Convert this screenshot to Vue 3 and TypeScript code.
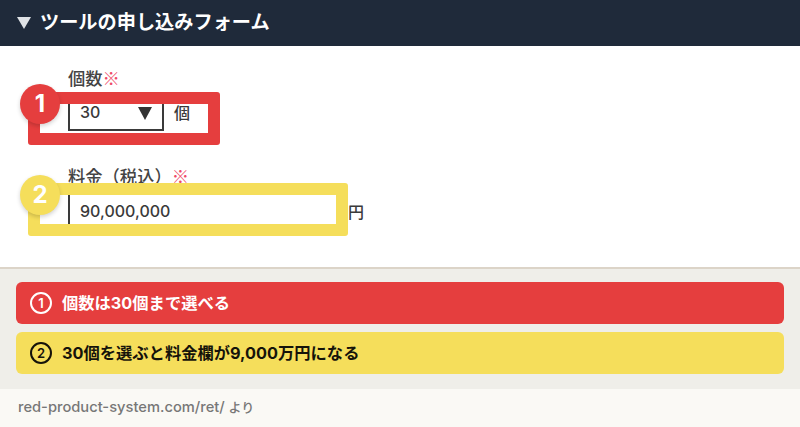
<script setup lang="ts">
const notes = [
  { mark: '1', text: '個数は30個まで選べる', tone: 'red' },
  { mark: '2', text: '30個を選ぶと料金欄が9,000万円になる', tone: 'yellow' },
];
</script>

<template>
  <div class="page">
    <header class="head"><span class="tri"></span><h1>ツールの申し込みフォーム</h1></header>
    <section class="form">
      <div class="field qty">
        <div class="label">個数<em>※</em></div>
        <div class="row">
          <div class="select"><span>30</span><i></i></div>
          <span class="unit">個</span>
        </div>
        <div class="hl hl-red"></div>
        <div class="badge badge-red">1</div>
      </div>
      <div class="field price">
        <div class="label">料金（税込）<em>※</em></div>
        <div class="row">
          <div class="input">90,000,000</div>
          <span class="unit yen">円</span>
        </div>
        <div class="hl hl-yellow"></div>
        <div class="badge badge-yellow">2</div>
      </div>
    </section>
    <section class="notes">
      <div v-for="n in notes" :key="n.mark" class="note" :class="n.tone">
        <span class="mark">{{ n.mark }}</span><span class="note-text">{{ n.text }}</span>
      </div>
    </section>
    <footer class="foot">red-product-system.com/ret/ <span class="yori">より</span></footer>
  </div>
</template>

<style scoped>
.page {
  width: 800px;
  height: 427px;
  overflow: hidden;
  display: flex;
  flex-direction: column;
  background: #fff;
  font-family: Inter, "Noto Sans CJK JP", "Noto Sans", sans-serif;
}
.head {
  height: 46px;
  flex: none;
  background: #1f2a3a;
  display: flex;
  align-items: center;
  padding-left: 17px;
  gap: 9px;
  color: #fff;
}
.tri {
  width: 0;
  height: 0;
  border-left: 7px solid transparent;
  border-right: 7px solid transparent;
  border-top: 12px solid #dfe2e6;
}
h1 {
  margin: 0;
  font-size: 19.2px;
  font-weight: 700;
  line-height: 1;
}
.form {
  height: 221px;
  flex: none;
  position: relative;
}
.field {
  position: absolute;
  left: 68px;
  color: #3a3a3a;
}
.qty { top: 20px; }
.price { top: 118px; }
.label {
  font-size: 17.3px;
  font-weight: 500;
  line-height: 24px;
  color: #444;
  white-space: nowrap;
}
.label em {
  font-family: "Noto Sans CJK JP", sans-serif;
  font-style: normal;
  font-weight: 400;
  color: #ef4a68;
}
.row {
  display: flex;
  align-items: center;
  margin-top: 1px;
}
.price .row { margin-top: 2px; }
.select {
  box-sizing: border-box;
  width: 96px;
  height: 39px;
  border: 2px solid #3a3a3a;
  display: flex;
  align-items: center;
  justify-content: space-between;
  padding: 0 10px;
  font-size: 16px;
  font-weight: 500;
}
.select i {
  width: 0;
  height: 0;
  margin-top: 3px;
  border-left: 7px solid transparent;
  border-right: 7px solid transparent;
  border-top: 13px solid #333;
}
.unit {
  font-size: 16px;
  font-weight: 500;
  margin-left: 10px;
  padding-top: 1px;
  color: #3a3a3a;
}
.input {
  box-sizing: border-box;
  width: 269px;
  height: 39px;
  border-left: 2px solid #3a3a3a;
  padding-left: 10px;
  font-size: 16px;
  font-weight: 500;
  display: flex;
  align-items: center;
}
.yen { margin-left: 11px; }
.hl {
  position: absolute;
  box-sizing: border-box;
  left: -40px;
  top: 26px;
  height: 53px;
  border: 12px solid;
  border-radius: 3px;
}
.hl-red { width: 192px; border-color: #e53e3e; }
.hl-yellow { width: 320px; top: 19px; border-color: #f5de5b; }
.badge {
  position: absolute;
  left: -48px;
  top: 18px;
  width: 40px;
  height: 40px;
  border-radius: 50%;
  display: flex;
  align-items: center;
  justify-content: center;
  color: #fff;
  font-size: 24px;
  font-weight: 700;
  line-height: 1;
  box-shadow: 0 2px 4px rgba(0, 0, 0, 0.18);
}
.badge-red { background: #e53e3e; }
.badge-yellow { background: #f5de5b; top: 11px; }
.notes {
  flex: none;
  height: 122px;
  box-sizing: border-box;
  border-top: 2px solid #dcd4c8;
  background: #efeee9;
  padding: 13px 16px 0;
  display: flex;
  flex-direction: column;
  gap: 8px;
}
.note {
  height: 42px;
  border-radius: 6px;
  display: flex;
  align-items: center;
  padding-left: 14px;
  gap: 10px;
  font-size: 16.3px;
  font-weight: 700;
}
.note-text { margin-top: -2px; }
.mark {
  box-sizing: border-box;
  width: 22px;
  height: 22px;
  border: 2px solid currentColor;
  border-radius: 50%;
  font-size: 13px;
  font-weight: 600;
  line-height: 1;
  display: flex;
  align-items: center;
  justify-content: center;
}
.red { background: #e53e3e; color: #fff; }
.yellow { background: #f5de5b; color: #15130a; }
.foot {
  flex: 1;
  background: #faf9f5;
  color: #777;
  font-size: 14.7px;
  font-weight: 500;
  line-height: 20px;
  padding: 8px 18px 0;
}
.yori { font-size: 13px; }
</style>
